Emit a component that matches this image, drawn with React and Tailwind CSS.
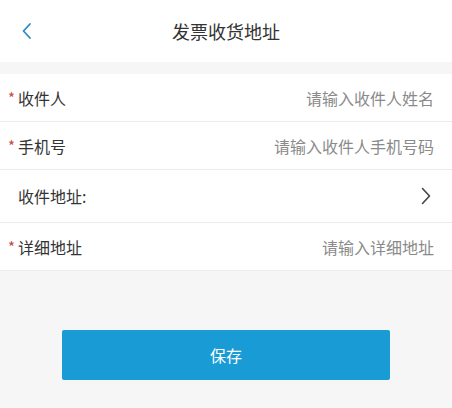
import { useState } from 'react';

const font = { fontFamily: '"Noto Sans CJK SC", "Noto Sans", sans-serif' };

function Field({ label, required, placeholder, value, onChange }) {
  return (
    <div className="flex items-center h-12 pl-2 pr-[18px] border-b border-[#ececec]">
      <span className="w-[10px] text-[15px] text-[#c24848] leading-none">{required ? '*' : ''}</span>
      <span className="text-base text-[#333] shrink-0">{label}</span>
      <input
        value={value}
        onChange={e => onChange(e.target.value)}
        placeholder={placeholder}
        className="flex-1 min-w-0 text-right text-base text-[#333] placeholder:text-[#8a8a8a] outline-none bg-transparent"
      />
    </div>
  );
}

export default function App() {
  const [form, setForm] = useState({ name: '', phone: '', detail: '' });
  const set = key => v => setForm(p => ({ ...p, [key]: v }));

  return (
    <div className="w-[452px] h-[408px] bg-[#f6f6f6] flex flex-col" style={font}>
      {/* Header */}
      <div className="h-[62px] bg-white flex items-center relative">
        <button className="ml-[19px] text-[#2a8cc4]">
          <svg width="16" height="18" viewBox="0 0 16 18" fill="none">
            <path d="M11 2 L4.5 9 L11 16" stroke="currentColor" strokeWidth="1.8" strokeLinecap="round" strokeLinejoin="round" />
          </svg>
        </button>
        <h1 className="absolute left-1/2 -translate-x-1/2 text-[18px] text-[#333]">发票收货地址</h1>
      </div>

      {/* Form */}
      <div className="mt-3 bg-white">
        <Field label="收件人" required placeholder="请输入收件人姓名" value={form.name} onChange={set('name')} />
        <Field label="手机号" required placeholder="请输入收件人手机号码" value={form.phone} onChange={set('phone')} />
        <div className="flex items-center h-[53px] pl-[18px] pr-[20px] border-b border-[#ececec]">
          <span className="text-base text-[#333]">收件地址:</span>
          <svg className="ml-auto text-[#444]" width="12" height="20" viewBox="0 0 12 20" fill="none">
            <path d="M2.5 2.5 L9.5 10 L2.5 17.5" stroke="currentColor" strokeWidth="1.6" strokeLinecap="round" strokeLinejoin="round" />
          </svg>
        </div>
        <Field label="详细地址" required placeholder="请输入详细地址" value={form.detail} onChange={set('detail')} />
      </div>

      {/* Save */}
      <div className="flex justify-center mt-[59px]">
        <button className="w-[328px] h-[50px] bg-[#199cd6] rounded-[2px] text-white text-base">保存</button>
      </div>
    </div>
  );
}
